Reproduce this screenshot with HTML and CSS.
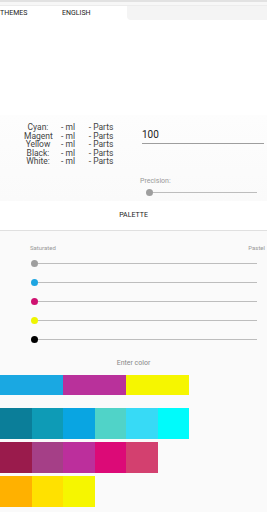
FILE: index.html
```html
<!DOCTYPE html>
<html lang="en">
<head>
    <meta charset="UTF-8">
    <meta name="viewport" content="width=device-width, initial-scale=1.0">
    <title>Color Mixer</title>
    <link rel="stylesheet" href="styles.css">
</head>
<body>
    <div class="top-bar"></div>
    <div class="tabs">
        <div class="tab-active">
            <span class="tab">THEMES</span>
            <span class="tab">ENGLISH</span>
        </div>
        <div class="tab-rest"></div>
    </div>

    <div class="preview"></div>

    <section class="mix">
        <div class="mix-row">
            <div class="recipe">
                <span>Cyan:</span><span>- ml</span><span>- Parts</span>
                <span>Magent</span><span>- ml</span><span>- Parts</span>
                <span>Yellow</span><span>- ml</span><span>- Parts</span>
                <span>Black:</span><span>- ml</span><span>- Parts</span>
                <span>White:</span><span>- ml</span><span>- Parts</span>
            </div>
            <div class="amount">100</div>
        </div>
        <div class="precision">
            <div class="label">Precision:</div>
            <div class="slider">
                <span class="thumb"></span>
                <span class="track"></span>
            </div>
        </div>
    </section>

    <div class="palette-btn">PALETTE</div>

    <section class="tones">
        <div class="tone-labels">
            <span>Saturated</span>
            <span>Pastel</span>
        </div>
        <div class="slider tone"><span class="thumb"></span><span class="track"></span></div>
        <div class="slider tone"><span class="thumb cyan"></span><span class="track"></span></div>
        <div class="slider tone"><span class="thumb magenta"></span><span class="track"></span></div>
        <div class="slider tone"><span class="thumb yellow"></span><span class="track"></span></div>
        <div class="slider tone"><span class="thumb black"></span><span class="track"></span></div>
        <div class="enter">Enter color</div>
    </section>

    <section class="swatches">
        <div class="swatch-row base">
            <span style="background:#1aa8e2"></span>
            <span style="background:#b9319b"></span>
            <span style="background:#f6f600"></span>
        </div>
        <div class="swatch-row">
            <span style="background:#0b7e99"></span>
            <span style="background:#0e9bb6"></span>
            <span style="background:#09a5e2"></span>
            <span style="background:#50d3c8"></span>
            <span style="background:#37daf6"></span>
            <span style="background:#00fbfb"></span>
        </div>
        <div class="swatch-row">
            <span style="background:#9a1b4c"></span>
            <span style="background:#a53f87"></span>
            <span style="background:#bc2f9c"></span>
            <span style="background:#dc0a77"></span>
            <span style="background:#d3406f"></span>
        </div>
        <div class="swatch-row">
            <span style="background:#ffb100"></span>
            <span style="background:#ffe100"></span>
            <span style="background:#f6f600"></span>
        </div>
    </section>
</body>
</html>
```

FILE: styles.css
```css
body {
    margin: 0;
    font-family: Roboto, "Liberation Sans", sans-serif;
    background-color: #fafafa;
    color: #333;
    overflow: hidden;
}
.top-bar {
    height: 3px;
    border-top: 2px solid #e2e2e2;
    border-bottom: 1px solid #ececec;
    background-color: #f7f7f7;
}
.tabs {
    display: flex;
    height: 14px;
    background-color: #fff;
}
.tab-active {
    width: 125px;
    display: flex;
    align-items: center;
    font-size: 7px;
    color: #222;
}
.tab {
    width: 62px;
}
.tab-rest {
    flex: 1;
    margin-left: 2px;
    background-color: #f4f4f4;
    border-bottom-left-radius: 4px;
}
.preview {
    height: 95px;
    background-color: #fff;
}
.mix {
    height: 86px;
    background: linear-gradient(#fdfdfd, #fafafa);
}
.mix-row {
    display: flex;
    padding-top: 8px;
}
.recipe {
    display: grid;
    grid-template-columns: 28px 20px 34px;
    column-gap: 6px;
    margin-left: 24px;
    font-size: 8.5px;
    line-height: 8.5px;
    color: #444;
    text-align: center;
}
.amount {
    margin-left: auto;
    margin-right: 3px;
    margin-top: 6px;
    width: 122px;
    height: 14px;
    font-size: 10px;
    line-height: 12px;
    color: #222;
    border-bottom: 1px solid #9e9e9e;
}
.precision {
    margin: 11px 10px 0 140px;
}
.label {
    font-size: 7px;
    color: #999;
    height: 8px;
    line-height: 8px;
}
.slider {
    display: flex;
    align-items: center;
    height: 8px;
}
.precision .slider {
    margin: 4px 0 0 6px;
}
.thumb {
    width: 7px;
    height: 7px;
    border-radius: 50%;
    background-color: #9e9e9e;
}
.track {
    flex: 1;
    height: 1px;
    background-color: #bdbdbd;
}
.palette-btn {
    height: 29px;
    line-height: 29px;
    text-align: center;
    font-size: 7px;
    color: #222;
    background-color: #fff;
    border-bottom: 1px solid #e0e0e0;
}
.tones {
    padding-top: 13px;
}
.tone-labels {
    display: flex;
    justify-content: space-between;
    margin: 0 2px 0 30px;
    font-size: 6px;
    color: #999;
    height: 8px;
    line-height: 8px;
}
.tone {
    margin: 0 10px 0 31px;
}
.tone-labels + .tone {
    margin-top: 7px;
}
.tone + .tone {
    margin-top: 11px;
}
.thumb.cyan { background-color: #1ea5e1; }
.thumb.magenta { background-color: #cf1270; }
.thumb.yellow { background-color: #eef500; }
.thumb.black { background-color: #000; }
.enter {
    margin-top: 15px;
    text-align: center;
    font-size: 7px;
    color: #888;
    height: 10px;
    line-height: 10px;
}
.swatches {
    padding-top: 7px;
}
.swatch-row {
    display: flex;
    height: 31px;
    margin-bottom: 3px;
}
.swatch-row span {
    width: 31.5px;
}
.swatch-row.base {
    height: 20px;
    margin-bottom: 13px;
}
.swatch-row.base span {
    width: 63px;
}
```
